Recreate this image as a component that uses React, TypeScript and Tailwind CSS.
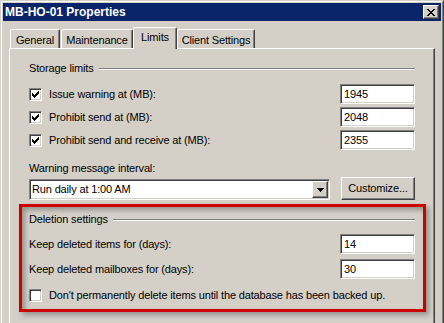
import React from "react";

const sunken =
  "border border-t-[#808080] border-l-[#808080] border-b-white border-r-white shadow-[inset_1px_1px_0_#404040,inset_-1px_-1px_0_#d4d0c8]";
const raised =
  "border border-t-white border-l-white border-b-[#404040] border-r-[#404040] shadow-[inset_-1px_-1px_0_#808080]";

function Check({ checked }: { checked: boolean }) {
  const rows: [number, number, number][] = [
    [6, 0, 1],
    [5, 1, 2],
    [0, 2, 1],
    [4, 2, 3],
    [0, 3, 2],
    [3, 3, 3],
    [0, 4, 5],
    [1, 5, 3],
    [2, 6, 1],
  ];
  return (
    <div className={`w-[13px] h-[13px] bg-white shrink-0 relative ${sunken}`}>
      {checked && (
        <svg
          width="7"
          height="7"
          viewBox="0 0 7 7"
          className="absolute left-[2px] top-[2px]"
          shapeRendering="crispEdges"
        >
          {rows.map(([x, y, w], i) => (
            <rect key={i} x={x} y={y} width={w} height={1} fill="#000" />
          ))}
        </svg>
      )}
    </div>
  );
}

function TextBox({ value }: { value: string }) {
  return (
    <div
      className={`w-[75px] h-[20px] bg-white flex items-center pl-[3px] ${sunken}`}
    >
      {value}
    </div>
  );
}

function GroupHeader({ label }: { label: string }) {
  return (
    <div className="flex items-center h-[13px]">
      <span className="whitespace-nowrap">{label}</span>
      <div className="flex-1 ml-[5px] flex flex-col">
        <div className="h-px bg-[#808080]" />
        <div className="h-px bg-white" />
      </div>
    </div>
  );
}

function CheckRow({ label, value }: { label: string; value: string }) {
  return (
    <div className="flex items-center h-[20px]">
      <Check checked />
      <span className="ml-[7px] flex-1">{label}</span>
      <TextBox value={value} />
    </div>
  );
}

function Tab({
  label,
  w,
  selected,
}: {
  label: string;
  w: string;
  selected?: boolean;
}) {
  return (
    <div
      className={`${w} ${
        selected ? "h-[22px] mt-0 relative z-10 pt-[3px]" : "h-[19px] mt-[2px] pt-[4px]"
      } bg-[#d4d0c8] border-t border-l border-t-white border-l-white border-r border-r-[#404040] shadow-[inset_-1px_0_0_#808080] rounded-tl-[2px] rounded-tr-[2px] text-center leading-[13px]`}
    >
      {label}
    </div>
  );
}

export default function App() {
  return (
    <div className="w-[444px] h-[323px] overflow-hidden relative bg-[#d4d0c8] font-['Liberation_Sans',Arial,sans-serif] text-[11px] tracking-[-0.15px] text-black leading-[13px]">
      <div className="h-[360px] border border-t-[#d4d0c8] border-l-[#d4d0c8] border-b-[#404040] border-r-[#404040]">
        <div className="h-full border border-t-white border-l-white border-b-[#808080] border-r-[#808080] p-px flex flex-col">
          {/* title bar */}
          <div className="h-[18px] bg-[#0a246a] flex items-center justify-between pl-[2px] pr-[2px]">
            <span className="text-white font-bold text-[12px] tracking-normal">
              MB-HO-01 Properties
            </span>
            <div
              className={`w-[16px] h-[14px] bg-[#d4d0c8] flex items-center justify-center ${raised}`}
            >
              <svg width="8" height="7" viewBox="0 0 8 7" shapeRendering="crispEdges">
                <rect x="0" y="0" width="2" height="1" />
                <rect x="6" y="0" width="2" height="1" />
                <rect x="1" y="1" width="2" height="1" />
                <rect x="5" y="1" width="2" height="1" />
                <rect x="2" y="2" width="4" height="1" />
                <rect x="3" y="3" width="2" height="1" />
                <rect x="2" y="4" width="4" height="1" />
                <rect x="1" y="5" width="2" height="1" />
                <rect x="5" y="5" width="2" height="1" />
                <rect x="0" y="6" width="2" height="1" />
                <rect x="6" y="6" width="2" height="1" />
              </svg>
            </div>
          </div>

          {/* body */}
          <div className="flex-1 px-[6px] pt-[6px] flex flex-col">
            <div className="flex h-[21px] pl-[1px]">
              <Tab label="General" w="w-[50px]" />
              <div className="w-px" />
              <Tab label="Maintenance" w="w-[72px]" />
              <Tab label="Limits" w="w-[44px]" selected />
              <Tab label="Client Settings" w="w-[78px]" />
            </div>
            <div className="flex-1 border-t border-l border-t-white border-l-white border-r border-r-[#404040] shadow-[inset_-1px_0_0_#808080] pl-[19px] pr-[19px] pt-[13px] flex flex-col">
              <GroupHeader label="Storage limits" />
              <div className="mt-[9px] flex flex-col gap-[3px]">
                <CheckRow label="Issue warning at (MB):" value="1945" />
                <CheckRow label="Prohibit send at (MB):" value="2048" />
                <CheckRow
                  label="Prohibit send and receive at (MB):"
                  value="2355"
                />
              </div>
              <div className="mt-[12px]">Warning message interval:</div>
              <div className="mt-[2px] flex items-end justify-between">
                <div
                  className={`w-[301px] h-[21px] bg-white flex items-center justify-between pl-[2px] ${sunken}`}
                >
                  <span>Run daily at 1:00 AM</span>
                  <div
                    className={`w-[16px] h-[17px] bg-[#d4d0c8] flex items-center justify-center mr-px ${raised}`}
                  >
                    <svg width="7" height="4" viewBox="0 0 7 4" shapeRendering="crispEdges">
                      <rect x="0" y="0" width="7" height="1" />
                      <rect x="1" y="1" width="5" height="1" />
                      <rect x="2" y="2" width="3" height="1" />
                      <rect x="3" y="3" width="1" height="1" />
                    </svg>
                  </div>
                </div>
                <div
                  className={`w-[74px] h-[23px] bg-[#d4d0c8] flex items-center justify-center ${raised}`}
                >
                  Customize...
                </div>
              </div>

              <div className="mt-[13px]">
                <GroupHeader label="Deletion settings" />
              </div>
              <div className="mt-[8px] flex flex-col gap-[5px]">
                <div className="flex items-center justify-between">
                  <span>Keep deleted items for (days):</span>
                  <TextBox value="14" />
                </div>
                <div className="flex items-center justify-between">
                  <span>Keep deleted mailboxes for (days):</span>
                  <TextBox value="30" />
                </div>
              </div>
              <div className="mt-[6px] h-[20px] flex items-center">
                <Check checked={false} />
                <span className="ml-[7px]">
                  Don't permanently delete items until the database has been
                  backed up.
                </span>
              </div>
            </div>
          </div>
        </div>
      </div>

      {/* red annotation box */}
      <div className="absolute left-[19px] top-[204px] w-[407px] h-[108px] border-[3px] border-[#cc0000] shadow-[3px_3px_5px_rgba(0,0,0,0.3),inset_3px_3px_5px_rgba(0,0,0,0.3)] pointer-events-none" />
    </div>
  );
}
